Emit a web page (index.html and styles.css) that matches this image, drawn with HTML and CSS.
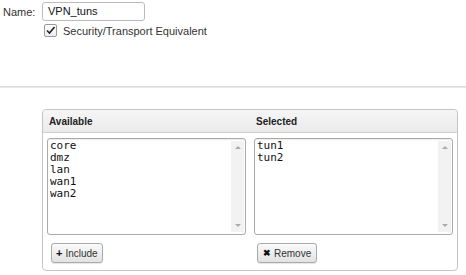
FILE: index.html
```html
<!DOCTYPE html>
<html lang="en">
<head>
    <meta charset="UTF-8">
    <title>Zone Group</title>
    <link rel="stylesheet" href="styles.css">
</head>
<body>
    <div class="form-top">
        <div class="name-row">
            <label class="name-label" for="name">Name:</label>
            <div class="text-input" id="name">VPN_tuns</div>
        </div>
        <div class="check-row">
            <span class="checkbox">
                <svg width="11" height="11" viewBox="0 0 11 11"><path d="M2 5.5 L4.5 8 L9.5 2" fill="none" stroke="#222" stroke-width="1.6"/></svg>
            </span>
            <span class="check-label">Security/Transport Equivalent</span>
        </div>
    </div>

    <div class="divider"></div>

    <div class="panel">
        <div class="panel-head">
            <div class="col-title">Available</div>
            <div class="col-title">Selected</div>
        </div>
        <div class="panel-body">
            <div class="column">
                <div class="listbox">
                    <div class="list-items">
                        <div>core</div>
                        <div>dmz</div>
                        <div>lan</div>
                        <div>wan1</div>
                        <div>wan2</div>
                    </div>
                    <div class="scroll"><span class="arrow up"></span><span class="arrow down"></span></div>
                </div>
                <button class="btn btn-include"><span class="btn-icon">+</span>Include</button>
            </div>
            <div class="column">
                <div class="listbox">
                    <div class="list-items">
                        <div>tun1</div>
                        <div>tun2</div>
                    </div>
                    <div class="scroll"><span class="arrow up"></span><span class="arrow down"></span></div>
                </div>
                <button class="btn btn-remove"><span class="btn-icon">&#x2716;</span>Remove</button>
            </div>
        </div>
    </div>
</body>
</html>
```

FILE: styles.css
```css
/* Global styles */
body {
    margin: 0;
    font-family: "Liberation Sans", Arial, sans-serif;
    font-size: 11px;
    color: #222;
    background: #fff;
}

/* Top form */
.form-top {
    padding: 2px 0 0 3px;
}

.name-row {
    display: flex;
    align-items: center;
}

.name-label {
    flex: none;
    width: 39px;
    font-size: 11px;
    color: #333;
}

.text-input {
    width: 93px;
    height: 17px;
    line-height: 17px;
    padding: 0 3px 0 5px;
    border: 1px solid #bbb;
    border-radius: 3px;
    color: #111;
}

.check-row {
    display: flex;
    align-items: center;
    margin: 3px 0 0 41px;
}

.checkbox {
    width: 11px;
    height: 11px;
    border: 1px solid #999;
    border-radius: 2px;
    background: linear-gradient(#fff, #eee);
    display: flex;
    margin-right: 6px;
}

.check-label {
    color: #333;
}

.divider {
    height: 1px;
    border-top: 1px solid #ddd;
    background: #e8e8e8;
    margin-top: 49px;
}

/* Selection panel */
.panel {
    margin: 21px 0 0 42px;
    width: 414px;
    border: 1px solid #c4c4c4;
    border-radius: 4px;
}

.panel-head {
    display: flex;
    gap: 8px;
    padding: 0 4px;
    height: 22px;
    background: linear-gradient(#f6f6f6, #ebebeb);
    border-bottom: 1px solid #d0d0d0;
    border-radius: 4px 4px 0 0;
}

.col-title {
    flex: 1;
    padding-left: 2px;
    line-height: 23px;
    font-size: 10px;
    font-weight: bold;
    color: #222;
}

.panel-body {
    display: flex;
    gap: 8px;
    padding: 5px 4px 7px;
}

.column {
    flex: 1;
}

.listbox {
    display: flex;
    height: 95px;
    border: 1px solid #aaa;
    border-radius: 3px;
    box-shadow: inset 0 1px 1px rgba(0, 0, 0, 0.08);
}

.list-items {
    flex: 1;
    padding: 1px 2px 0;
    font-family: "DejaVu Sans Mono", monospace;
    font-size: 11px;
    line-height: 12px;
    color: #111;
}

.scroll {
    width: 13px;
    margin: 2px 1px 2px 0;
    background: #f2f2f2;
    position: relative;
}

.arrow {
    position: absolute;
    left: 4px;
    width: 0;
    height: 0;
    border-left: 3px solid transparent;
    border-right: 3px solid transparent;
}

.arrow.up {
    top: 5px;
    border-bottom: 3px solid #aaa;
}

.arrow.down {
    bottom: 5px;
    border-top: 3px solid #aaa;
}

/* Buttons */
.btn {
    margin-top: 8px;
    height: 20px;
    padding: 0 5px;
    font-family: "Liberation Sans", Arial, sans-serif;
    font-size: 10px;
    color: #333;
    background: linear-gradient(#fafafa, #e2e2e2);
    border: 1px solid #aaa;
    border-radius: 3px;
    box-shadow: 0 1px 1px rgba(0, 0, 0, 0.1);
    display: flex;
    align-items: center;
}

.btn-include {
    margin-left: 4px;
    padding: 0 4px;
}

.btn-remove {
    margin-left: 3px;
}

.btn-icon {
    font-weight: bold;
    color: #111;
    margin-right: 3px;
    font-size: 11px;
}

.btn-remove .btn-icon {
    font-size: 9px;
}
```
